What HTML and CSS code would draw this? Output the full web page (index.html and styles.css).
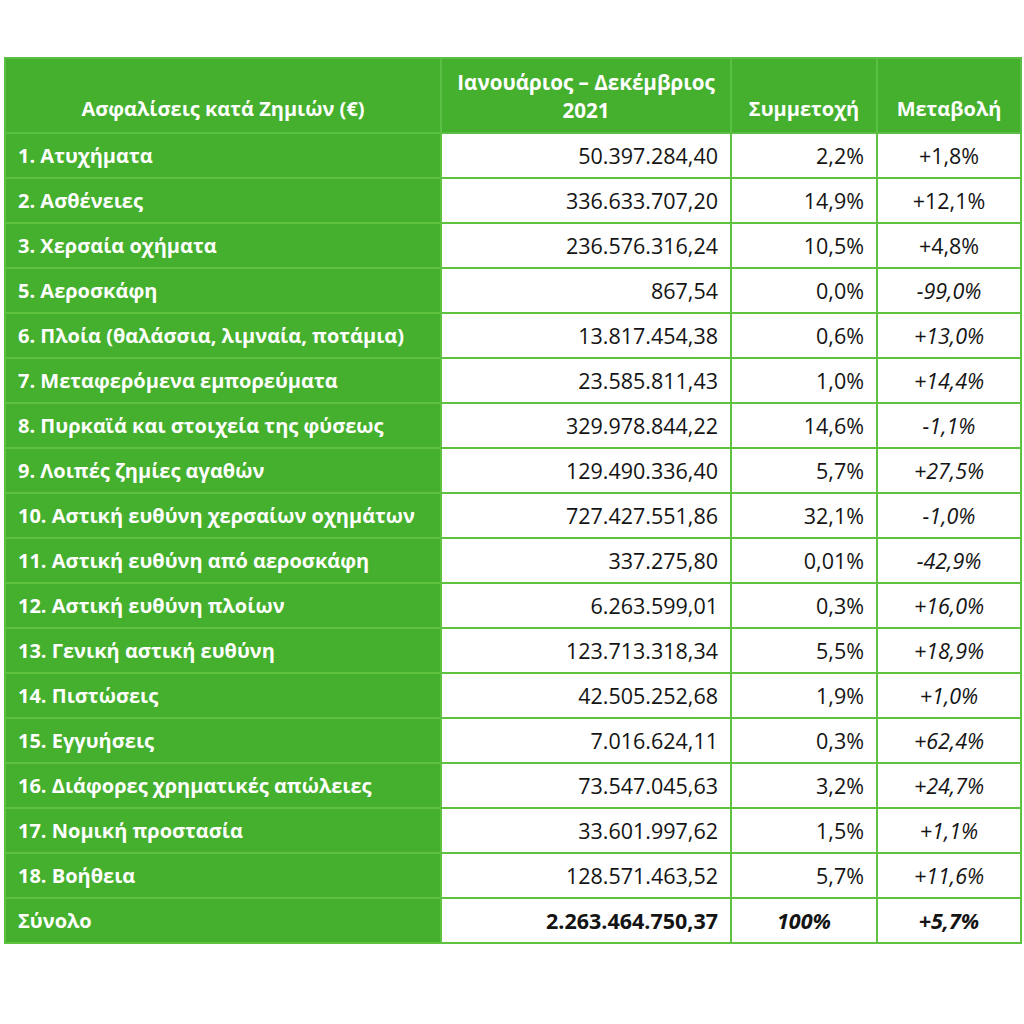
FILE: index.html
```html
<!DOCTYPE html>
<html lang="el">
<head>
<meta charset="utf-8">
<title>Ασφαλίσεις κατά Ζημιών</title>
<link rel="stylesheet" href="styles.css">
</head>
<body>
<table class="tbl">
  <colgroup>
    <col class="c1"><col class="c2"><col class="c3"><col class="c4">
  </colgroup>
  <thead>
    <tr class="head">
      <th>Ασφαλίσεις κατά Ζημιών (€)</th>
      <th class="top">Ιανουάριος – Δεκέμβριος<br>2021</th>
      <th>Συμμετοχή</th>
      <th>Μεταβολή</th>
    </tr>
  </thead>
  <tbody>
    <tr><td class="lab">1. Ατυχήματα</td><td class="num">50.397.284,40</td><td class="num">2,2%</td><td class="chg">+1,8%</td></tr>
    <tr><td class="lab">2. Ασθένειες</td><td class="num">336.633.707,20</td><td class="num">14,9%</td><td class="chg">+12,1%</td></tr>
    <tr><td class="lab">3. Χερσαία οχήματα</td><td class="num">236.576.316,24</td><td class="num">10,5%</td><td class="chg">+4,8%</td></tr>
    <tr><td class="lab">5. Αεροσκάφη</td><td class="num">867,54</td><td class="num">0,0%</td><td class="chg it">-99,0%</td></tr>
    <tr><td class="lab">6. Πλοία (θαλάσσια, λιμναία, ποτάμια)</td><td class="num">13.817.454,38</td><td class="num">0,6%</td><td class="chg it">+13,0%</td></tr>
    <tr><td class="lab">7. Μεταφερόμενα εμπορεύματα</td><td class="num">23.585.811,43</td><td class="num">1,0%</td><td class="chg it">+14,4%</td></tr>
    <tr><td class="lab">8. Πυρκαϊά και στοιχεία της φύσεως</td><td class="num">329.978.844,22</td><td class="num">14,6%</td><td class="chg it">-1,1%</td></tr>
    <tr><td class="lab">9. Λοιπές ζημίες αγαθών</td><td class="num">129.490.336,40</td><td class="num">5,7%</td><td class="chg it">+27,5%</td></tr>
    <tr><td class="lab">10. Αστική ευθύνη χερσαίων οχημάτων</td><td class="num">727.427.551,86</td><td class="num">32,1%</td><td class="chg it">-1,0%</td></tr>
    <tr><td class="lab">11. Αστική ευθύνη από αεροσκάφη</td><td class="num">337.275,80</td><td class="num">0,01%</td><td class="chg it">-42,9%</td></tr>
    <tr><td class="lab">12. Αστική ευθύνη πλοίων</td><td class="num">6.263.599,01</td><td class="num">0,3%</td><td class="chg it">+16,0%</td></tr>
    <tr><td class="lab">13. Γενική αστική ευθύνη</td><td class="num">123.713.318,34</td><td class="num">5,5%</td><td class="chg it">+18,9%</td></tr>
    <tr><td class="lab">14. Πιστώσεις</td><td class="num">42.505.252,68</td><td class="num">1,9%</td><td class="chg it">+1,0%</td></tr>
    <tr><td class="lab">15. Εγγυήσεις</td><td class="num">7.016.624,11</td><td class="num">0,3%</td><td class="chg it">+62,4%</td></tr>
    <tr><td class="lab">16. Διάφορες χρηματικές απώλειες</td><td class="num">73.547.045,63</td><td class="num">3,2%</td><td class="chg it">+24,7%</td></tr>
    <tr><td class="lab">17. Νομική προστασία</td><td class="num">33.601.997,62</td><td class="num">1,5%</td><td class="chg it">+1,1%</td></tr>
    <tr><td class="lab">18. Βοήθεια</td><td class="num">128.571.463,52</td><td class="num">5,7%</td><td class="chg it">+11,6%</td></tr>
    <tr class="total"><td class="lab">Σύνολο</td><td class="num">2.263.464.750,37</td><td class="chg it">100%</td><td class="chg it">+5,7%</td></tr>
  </tbody>
</table>
</body>
</html>
```
FILE: styles.css
```css
html, body {
  margin: 0;
  padding: 0;
  background: #ffffff;
}
body {
  padding: 57px 0 0 4px;
  font-family: "Open Sans", "Noto Sans", "DejaVu Sans", sans-serif;
}
.tbl {
  border-collapse: collapse;
  table-layout: fixed;
  width: 1016px;
  font-size: 21.5px;
  color: #141414;
}
.c1 { width: 436px; }
.c2 { width: 290px; }
.c3 { width: 146px; }
.c4 { width: 144px; }
.tbl th, .tbl td {
  border: 2px solid #5fc23f;
  padding: 0 12px;
  white-space: nowrap;
}
.head th {
  height: 64px;
  background: #45b02d;
  color: #ffffff;
  font-size: 20px;
  font-weight: 700;
  text-align: center;
  vertical-align: bottom;
  padding-bottom: 9px;
  line-height: 28px;
  border-color: #5cbf45;
}
.head th.top {
  vertical-align: top;
  padding-top: 9px;
  padding-bottom: 0;
  font-size: 20.6px;
}
.tbl td {
  height: 43px;
  line-height: 24px;
}
.lab {
  background: #45b02d;
  color: #ffffff;
  font-size: 20px;
  font-weight: 700;
  padding-left: 14px;
  border-color: #5cbf45;
}
.num { text-align: right; }
.chg { text-align: center; }
.it { font-style: italic; }
.total td { font-weight: 700; }
```
